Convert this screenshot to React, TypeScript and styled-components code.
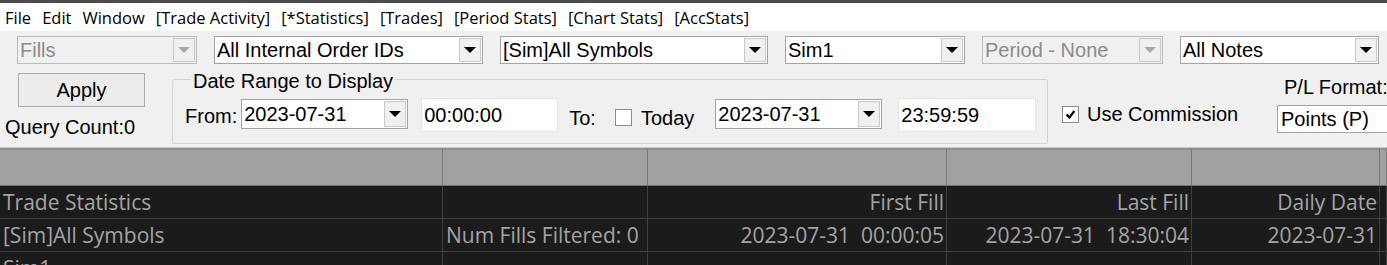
import React from 'react';
import styled, { createGlobalStyle } from 'styled-components';

const GlobalStyle = createGlobalStyle`
  html, body {
    margin: 0;
    padding: 0;
    background: #f0f0f0;
    overflow: hidden;
  }
  body {
    font-family: "Liberation Sans", Arial, sans-serif;
    color: #000;
  }
`;

const Window = styled.div`
  width: 1387px;
  height: 265px;
  overflow: hidden;
  display: flex;
  flex-direction: column;
  background: #f0f0f0;
`;

const TitleStrip = styled.div`
  height: 3px;
  flex: none;
  background: #4b4b4b;
`;

const MenuBar = styled.div`
  height: 28px;
  flex: none;
  background: #fff;
  display: flex;
  align-items: center;
  gap: 11px;
  padding-left: 5px;
  font-family: "Open Sans", "Noto Sans", sans-serif;
  font-size: 16.5px;
`;

const MenuItem = styled.span`
  white-space: nowrap;
`;

const ComboRow = styled.div`
  display: flex;
  flex: none;
  gap: 17px;
  margin-top: 5px;
  padding-left: 17px;
  height: 28px;
`;

const ComboBox = styled.div<{ $w: number; $h?: number; $disabled?: boolean }>`
  width: ${p => p.$w}px;
  height: ${p => p.$h ?? 28}px;
  box-sizing: border-box;
  flex: none;
  display: flex;
  align-items: stretch;
  border: 1px solid ${p => (p.$disabled ? '#bcbcbc' : '#a3a3a3')};
  background: ${p => (p.$disabled ? '#f0f0f0' : '#fff')};
  color: ${p => (p.$disabled ? '#8b8b8b' : '#000')};
  font-size: 20px;
`;

const ComboText = styled.div`
  flex: 1;
  padding-left: 2px;
  display: flex;
  align-items: center;
  white-space: nowrap;
  overflow: hidden;
`;

const ComboButton = styled.div<{ $disabled?: boolean }>`
  width: 22px;
  margin: 1px 1px 1px 0;
  box-sizing: border-box;
  border: 1px solid #c9c9c9;
  background: #f0f0f0;
  display: flex;
  align-items: center;
  justify-content: center;
  &::after {
    content: '';
    border-left: 6px solid transparent;
    border-right: 6px solid transparent;
    border-top: 6px solid ${p => (p.$disabled ? '#a8a8a8' : '#000')};
  }
`;

const ControlRow = styled.div`
  display: flex;
  flex: none;
  height: 83px;
  align-items: flex-start;
`;

const ApplyColumn = styled.div`
  width: 172px;
  flex: none;
  display: flex;
  flex-direction: column;
  padding: 9px 0 0 5px;
  box-sizing: border-box;
`;

const ApplyButton = styled.div`
  width: 127px;
  height: 34px;
  margin-left: 13px;
  box-sizing: border-box;
  border: 1px solid #adadad;
  background: #ececec;
  display: flex;
  align-items: center;
  justify-content: center;
  font-size: 20px;
`;

const QueryCount = styled.div`
  margin-top: 9px;
  font-size: 20px;
  line-height: 23px;
  white-space: nowrap;
`;

const GroupBox = styled.fieldset`
  width: 876px;
  height: 77px;
  box-sizing: border-box;
  margin: 3px 0 0 0;
  padding: 8px 0 0 12px;
  border: 1px solid #d3d3d3;
  border-radius: 2px;
  flex: none;
  display: flex;
  align-items: flex-start;
`;

const Legend = styled.legend`
  font-size: 20px;
  line-height: 20px;
  padding: 4px 2px 0 2px;
  margin-left: 6px;
`;

const FieldLabel = styled.span<{ $ml?: number; $mt?: number }>`
  font-size: 20px;
  line-height: 23px;
  margin-left: ${p => p.$ml ?? 0}px;
  margin-top: ${p => p.$mt ?? 6}px;
  white-space: nowrap;
  flex: none;
`;

const TimeInput = styled.div<{ $w: number; $ml: number }>`
  width: ${p => p.$w}px;
  height: 34px;
  margin-left: ${p => p.$ml}px;
  margin-top: -1px;
  box-sizing: border-box;
  border: 1px solid #e4e4e4;
  background: #fff;
  display: flex;
  align-items: center;
  padding-left: 2px;
  font-size: 20px;
  flex: none;
`;

const Check = styled.div<{ $ml: number; $mt?: number }>`
  width: 17px;
  height: 17px;
  margin-left: ${p => p.$ml}px;
  margin-top: ${p => p.$mt ?? 0}px;
  box-sizing: border-box;
  border: 1px solid #8c8c8c;
  background: #fff;
  flex: none;
  display: flex;
  align-items: center;
  justify-content: center;
`;

const Spot = styled.div<{ $ml: number }>`
  margin-left: ${p => p.$ml}px;
  flex: none;
`;

const CommissionBlock = styled.div`
  width: 215px;
  margin: 39px 0 0 14px;
  display: flex;
  align-items: center;
  flex: none;
`;

const PLColumn = styled.div`
  padding-top: 12px;
  display: flex;
  flex-direction: column;
  flex: none;
`;

const PLLabel = styled.div`
  font-size: 20px;
  line-height: 23px;
  margin-left: 7px;
  white-space: nowrap;
`;

const PLInput = styled.div`
  margin-top: 6px;
  width: 120px;
  height: 28px;
  box-sizing: border-box;
  border: 1px solid #a3a3a3;
  border-right: none;
  background: #fff;
  padding-left: 3px;
  display: flex;
  align-items: center;
  font-size: 20px;
  white-space: nowrap;
`;

const Table = styled.div`
  border-top: 1px solid #c8c8c8;
  display: grid;
  grid-template-columns: 443px 205px 299px 245px 188px 1fr;
  grid-template-rows: 38px;
  grid-auto-rows: 33px;
  font-family: "Open Sans", "Noto Sans", sans-serif;
  font-size: 21px;
  flex: 1;
`;

const HeadCell = styled.div`
  background: #a1a1a1;
  border-right: 1px solid #7a7a7a;
  border-top: 2px solid #8e8e8e;
  border-bottom: 1px solid #6f6f6f;
`;

const Cell = styled.div<{ $right?: boolean }>`
  background: #1b1b1b;
  color: #a4a4a4;
  border-right: 1px solid #3e3e3e;
  border-bottom: 1px solid #3e3e3e;
  display: flex;
  align-items: center;
  justify-content: ${p => (p.$right ? 'flex-end' : 'flex-start')};
  padding: 0 2px 0 3px;
  white-space: pre;
  overflow: hidden;
`;

const CheckMark = () => (
  <svg width="11" height="11" viewBox="0 0 10 10">
    <path d="M1.5 5 L4 7.8 L8.5 1.8" stroke="#000" strokeWidth="2" fill="none" />
  </svg>
);

const Combo: React.FC<{ w: number; text: string; disabled?: boolean; h?: number }> = ({ w, text, disabled, h }) => (
  <ComboBox $w={w} $h={h} $disabled={disabled}>
    <ComboText>{text}</ComboText>
    <ComboButton $disabled={disabled} />
  </ComboBox>
);

const menus = ['File', 'Edit', 'Window', '[Trade Activity]', '[*Statistics]', '[Trades]', '[Period Stats]', '[Chart Stats]', '[AccStats]'];

const rows: { text: string; right?: boolean }[][] = [
  [{ text: 'Trade Statistics' }, { text: '' }, { text: 'First Fill', right: true }, { text: 'Last Fill', right: true }, { text: 'Daily Date', right: true }, { text: '' }],
  [{ text: '[Sim]All Symbols' }, { text: 'Num Fills Filtered: 0' }, { text: '2023-07-31  00:00:05', right: true }, { text: '2023-07-31  18:30:04', right: true }, { text: '2023-07-31', right: true }, { text: '' }],
  [{ text: 'Sim1' }, { text: '' }, { text: '' }, { text: '' }, { text: '' }, { text: '' }],
];

export default function App() {
  return (
    <Window>
      <GlobalStyle />
      <TitleStrip />
      <MenuBar>
        {menus.map(m => (
          <MenuItem key={m}>{m}</MenuItem>
        ))}
      </MenuBar>

      <ComboRow>
        <Combo w={180} text="Fills" disabled />
        <Combo w={269} text="All Internal Order IDs" />
        <Combo w={268} text="[Sim]All Symbols" />
        <Combo w={180} text="Sim1" />
        <Combo w={181} text="Period - None" disabled />
        <Combo w={199} text="All Notes" />
      </ComboRow>

      <ControlRow>
        <ApplyColumn>
          <ApplyButton>Apply</ApplyButton>
          <QueryCount>Query Count:0</QueryCount>
        </ApplyColumn>

        <GroupBox>
          <Legend>Date Range to Display</Legend>
          <FieldLabel>From:</FieldLabel>
          <Spot $ml={4}>
            <Combo w={167} h={30} text="2023-07-31" />
          </Spot>
          <TimeInput $w={137} $ml={13}>00:00:00</TimeInput>
          <FieldLabel $ml={11} $mt={8}>To:</FieldLabel>
          <Check $ml={19} $mt={10} />
          <FieldLabel $ml={9} $mt={8}>Today</FieldLabel>
          <Spot $ml={21}>
            <Combo w={167} h={30} text="2023-07-31" />
          </Spot>
          <TimeInput $w={138} $ml={16}>23:59:59</TimeInput>
        </GroupBox>

        <CommissionBlock>
          <Check $ml={0}>
            <CheckMark />
          </Check>
          <FieldLabel $ml={8} $mt={0}>Use Commission</FieldLabel>
        </CommissionBlock>

        <PLColumn>
          <PLLabel>P/L Format:</PLLabel>
          <PLInput>Points (P)</PLInput>
        </PLColumn>
      </ControlRow>

      <Table>
        {Array.from({ length: 6 }).map((_, i) => (
          <HeadCell key={'h' + i} />
        ))}
        {rows.map((r, ri) =>
          r.map((c, ci) => (
            <Cell key={ri + '-' + ci} $right={c.right}>
              {c.text}
            </Cell>
          ))
        )}
      </Table>
    </Window>
  );
}
